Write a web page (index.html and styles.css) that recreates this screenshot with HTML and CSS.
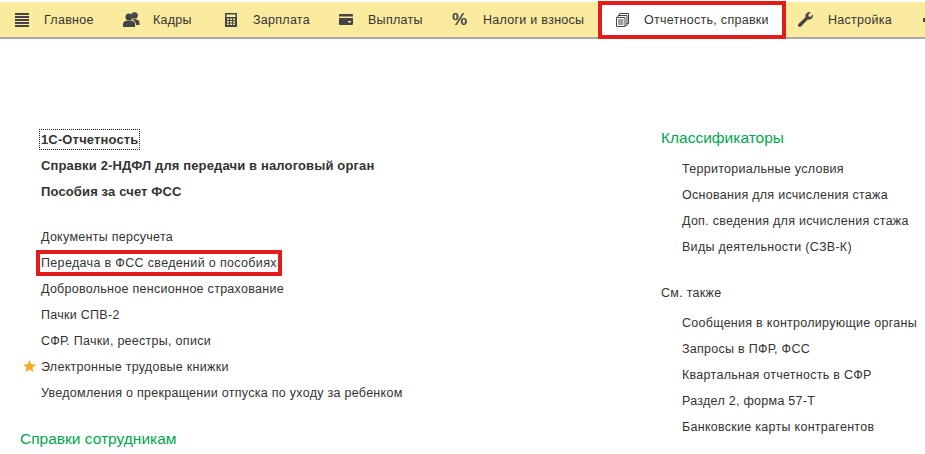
FILE: index.html
```html
<!DOCTYPE html>
<html lang="ru">
<head>
<meta charset="utf-8">
<title>Отчетность, справки</title>
<link rel="stylesheet" href="styles.css">
</head>
<body>
<nav class="nav">
  <a class="tab t1"><svg class="ic" width="14" height="14" viewBox="0 0 14 14"><path d="M0 0h14v2H0zM0 3h14v2H0zM0 6h14v2H0zM0 9h14v2H0zM0 12h14v2H0z" fill="#444"/></svg><span>Главное</span></a>
  <a class="tab t2"><svg class="ic" width="17" height="15" viewBox="0 0 17 15"><circle cx="6" cy="5" r="3.500" fill="#444"/><circle cx="11.500" cy="3.500" r="3.300" fill="#444"/><path d="M0 15v-3c0-2 2-3.500 6-3.500s6 1.500 6 3.500v3zM9 7.500c1-.5 6-.8 7 1.500.5 1 .5 2.500.5 4H13c0-2-1-4-4-5.500z" fill="#444"/></svg><span>Кадры</span></a>
  <a class="tab t3"><svg class="ic" width="12" height="14" viewBox="0 0 12 14"><path fill-rule="evenodd" d="M0 0h12v14H0zM1.500 1.500v2.500h9V1.500zM2 5.500V7h2V5.500zM5 5.500V7h2V5.500zM8 5.500V7h2V5.500zM2 8v1.500h2V8zM5 8v1.500h2V8zM8 8v1.500h2V8zM2 10.500V12h2v-1.500zM5 10.500V12h2v-1.500zM8 10.500V12h2v-1.500z" fill="#444"/></svg><span>Зарплата</span></a>
  <a class="tab t4"><svg class="ic" width="14" height="11" viewBox="0 0 14 11"><path fill-rule="evenodd" d="M0 1q0-1 1-1h12q1 0 1 1v1.500H0zM0 4h14v6q0 1-1 1H1q-1 0-1-1zM9 7v1.500h3V7z" fill="#444"/></svg><span>Выплаты</span></a>
  <a class="tab t5"><span class="pct">%</span><span>Налоги и взносы</span></a>
  <a class="tab t6 active"><svg class="ic" width="13" height="14" viewBox="0 0 13 14"><g fill="none" stroke="#444"><path d="M3.500 2.500V.5h9v10h-2"/><path d="M2 4V2.500h9v10H9.500"/><path d="M.5 4.500h8.500v9H.5z" fill="#fff"/><path d="M2 7h5.500M2 9h5.500M2 11h5.500"/></g></svg><span>Отчетность, справки</span></a>
  <a class="tab t7"><svg class="ic" width="15" height="15" viewBox="0 0 15 15"><path d="M15 3.500c0 2.500-2.500 4.800-5.200 4L3.200 14.300c-1 1-2.200.7-2.700.2s-.8-1.700.2-2.700L7.500 5.200C6.700 2.500 9 0 11.500 0c.5 0 1 .1 1.300.2L10.300 2.700l.5 1.900 1.900.5L14.800 2.300c.1.400.2.800.2 1.200z" fill="#444"/></svg><span>Настройка</span></a>
  <a class="tab t8"><svg class="ic" width="14" height="14" viewBox="0 0 14 14"><path d="M5 0h4v5h5v4H9v5H5V9H0V5h5z" fill="#444"/></svg></a>
</nav>
<main class="content">
  <section class="col left">
    <ul class="list strong">
      <li><a class="focused">1С-Отчетность</a></li>
      <li><a>Справки 2-НДФЛ для передачи в налоговый орган</a></li>
      <li><a>Пособия за счет ФСС</a></li>
    </ul>
    <ul class="list gap">
      <li><a>Документы персучета</a></li>
      <li><a class="marked">Передача в ФСС сведений о пособиях</a></li>
      <li><a>Добровольное пенсионное страхование</a></li>
      <li><a>Пачки СПВ-2</a></li>
      <li><a>СФР. Пачки, реестры, описи</a></li>
      <li class="starred"><svg class="star" width="13" height="12" viewBox="0 0 13 12"><path d="M6.500 0l1.900 4.200 4.600.4-3.500 3 1 4.400-4-2.300-4 2.300 1-4.400L0 4.600l4.600-.4z" fill="#f9a825"/></svg><a>Электронные трудовые книжки</a></li>
      <li><a>Уведомления о прекращении отпуска по уходу за ребенком</a></li>
    </ul>
    <h2 class="head">Справки сотрудникам</h2>
  </section>
  <section class="col right">
    <h2 class="head">Классификаторы</h2>
    <ul class="list sub">
      <li><a>Территориальные условия</a></li>
      <li><a>Основания для исчисления стажа</a></li>
      <li><a>Доп. сведения для исчисления стажа</a></li>
      <li><a>Виды деятельности (СЗВ-К)</a></li>
    </ul>
    <h3 class="see">См. также</h3>
    <ul class="list sub seealso">
      <li><a>Сообщения в контролирующие органы</a></li>
      <li><a>Запросы в ПФР, ФСС</a></li>
      <li><a>Квартальная отчетность в СФР</a></li>
      <li><a>Раздел 2, форма 57-Т</a></li>
      <li><a>Банковские карты контрагентов</a></li>
    </ul>
  </section>
</main>
</body>
</html>
```
FILE: styles.css
```css
* { box-sizing: border-box; }
html, body { margin: 0; padding: 0; }
body {
  width: 925px;
  height: 454px;
  overflow: hidden;
  background: #fff;
  color: #333;
  font-family: "Liberation Sans", Arial, sans-serif;
  font-size: 12.5px;
  letter-spacing: 0.28px;
}
.nav {
  display: flex;
  align-items: flex-start;
  height: 37px;
  margin-top: 2px;
  background: #fbeb9f;
  border-bottom: 2px solid #a9a9a9;
  white-space: nowrap;
}
.tab {
  display: flex;
  align-items: center;
  flex: none;
  height: 35px;
}
.ic { flex: none; }
.t1 { padding-left: 15px; width: 123px; }
.t1 .ic { margin-right: 15px; }
.t2 { width: 102px; }
.t2 .ic { margin-right: 13px; }
.t3 { width: 114px; }
.t3 .ic { margin-right: 16px; }
.t4 { width: 113px; }
.t4 .ic { margin-right: 15px; }
.t5 { width: 146px; }
.pct { font-size: 17px; font-weight: bold; width: 31px; letter-spacing: 0; color: #444; }
.t6 {
  width: 188px;
  margin-top: -1px;
  height: 38px;
  padding-left: 14px;
  background: #fff;
  border: 4px solid #e41b1b;
}
.t6 .ic { margin-right: 15px; }
.t7 { padding-left: 12px; width: 137px; }
.t7 .ic { margin-right: 15px; }
.content {
  display: flex;
  padding-top: 86px;
}
.col { flex: none; }
.left { width: 661px; padding-left: 20px; padding-top: 2px; }
.list { list-style: none; margin: 0; padding: 0; }
.list li {
  height: 26px;
  line-height: 26px;
  white-space: nowrap;
}
.left .list { padding-left: 21px; }
.strong { font-weight: bold; font-size: 13px; letter-spacing: 0.14px; }
.gap { margin-top: 19px; }
.focused { outline: 1px dotted #222; padding: 2px 1px; margin-left: -1px; }
.marked { box-shadow: 0 0 0 4px #e41b1b; padding: 2px 1px; margin-left: -1px; letter-spacing: 0.34px; }
.starred { position: relative; }
.star { position: absolute; left: -18px; top: 6px; }
.head {
  margin: 0;
  height: 26px;
  line-height: 26px;
  font-size: 15.5px;
  font-weight: normal;
  letter-spacing: 0;
  color: #00a650;
}
.left .head { margin-top: 20px; }
.sub { padding-left: 21px; margin-top: 5px; }
.see {
  margin: 20px 0 0;
  height: 26px;
  line-height: 26px;
  font-size: 12.5px;
  font-weight: normal;
}
.seealso { margin-top: 4px; }
```
